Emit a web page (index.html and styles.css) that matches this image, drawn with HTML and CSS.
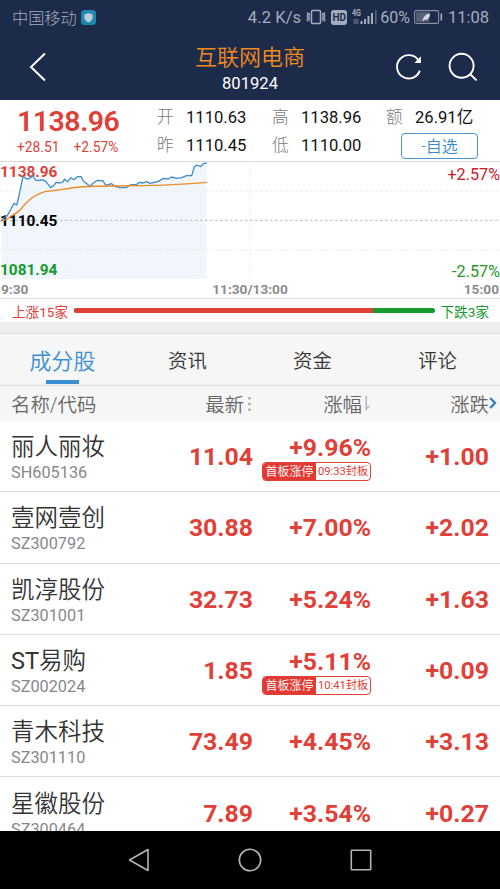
FILE: index.html
```html
<!DOCTYPE html>
<html lang="zh-CN">
<head>
    <meta charset="UTF-8">
    <meta name="viewport" content="width=device-width, initial-scale=1.0">
    <title>互联网电商</title>
    <link rel="stylesheet" href="styles.css">
</head>
<body>
    <div class="status-bar">
        <span class="carrier">中国移动</span>
        <svg class="shield" width="15" height="15" viewBox="0 0 15 15">
            <rect width="15" height="15" rx="3.5" fill="#2088ae"/>
            <path d="M7.5 3 L11.7 4.4 V7.5 Q11.5 10.6 7.5 12.4 Q3.5 10.6 3.3 7.5 V4.4 Z" fill="#b9ccd9"/>
        </svg>
        <span class="speed">4.2 K/s</span>
        <svg class="vibrate" width="20" height="16" viewBox="0 0 20 16" fill="none" stroke="#a4adbb">
            <rect x="5.5" y="1.5" width="9" height="13" rx="1" stroke-width="1.5"/>
            <path d="M1 3.5 l1.3 1.5 -1.3 2 1.3 2 -1.3 2 1 1.5 M3.2 4 v8 M16.8 4 v8 M19 3.5 l-1.3 1.5 1.3 2 -1.3 2 1.3 2 -1 1.5" stroke-width="1.2"/>
        </svg>
        <span class="hd">HD</span>
        <svg class="signal" width="26" height="18" viewBox="0 0 26 18">
            <text x="0" y="8" class="net" textLength="9" lengthAdjust="spacingAndGlyphs">4G</text>
            <path d="M1.5 11h5v5h-5z" fill="#4b5870"/>
            <path d="M8.5 13h2v3h-2z M12 11h2v5h-2z M15.5 8h2v8h-2z M19 5h2v11h-2z" fill="#a4adbb"/>
            <path d="M23 2h1.6v14h-1.6z" fill="#59657b"/>
        </svg>
        <span class="percent">60%</span>
        <svg class="battery" width="29" height="14" viewBox="0 0 29 14">
            <rect x="0.6" y="0.6" width="24" height="12.8" rx="1.5" fill="none" stroke="#8791a2" stroke-width="1.1"/>
            <rect x="2.2" y="2.2" width="13" height="9.6" fill="#56627a"/>
            <path d="M8.5 11 C9.5 6 12 4 16 3.6 C16 8 14 10.5 10.2 9.8 L9 11.5 Z" fill="#d2d7de"/>
            <path d="M27.3 3.5v7" stroke="#a4adbb" stroke-width="1.6"/>
        </svg>
        <span class="clock">11:08</span>
    </div>

    <header class="header">
        <svg class="back" width="20" height="32" viewBox="0 0 20 32" fill="none" stroke="#fff" stroke-width="2">
            <path d="M17 2.5 L3 16 L17 29.5"/>
        </svg>
        <div class="title">
            <h1>互联网电商</h1>
            <p>801924</p>
        </div>
        <div class="actions">
            <svg width="28" height="28" viewBox="0 0 28 28" fill="none" stroke="#fff" stroke-width="1.9">
                <path d="M24.8 17.6 A11.7 11.7 0 1 1 23.4 7.2"/>
                <path d="M25.9 3.3 V10 H19.4 Z" fill="#fff" stroke="none"/>
            </svg>
            <svg width="30" height="30" viewBox="0 0 30 30" fill="none" stroke="#fff" stroke-width="1.9">
                <circle cx="13.6" cy="13.8" r="12"/>
                <path d="M22.3 22.3 L28.6 28.4"/>
            </svg>
        </div>
    </header>

    <section class="quote">
        <div class="price">
            <strong>1138.96</strong>
            <div class="change"><span>+28.51</span><span>+2.57%</span></div>
        </div>
        <dl class="stats">
            <dt>开</dt><dd>1110.63</dd>
            <dt>高</dt><dd>1138.96</dd>
            <dt>额</dt><dd>26.91亿</dd>
            <dt>昨</dt><dd>1110.45</dd>
            <dt>低</dt><dd>1110.00</dd>
            <dd class="watch"><button>-自选</button></dd>
        </dl>
    </section>

    <section class="chart">
        <!-- intraday price (blue) and average (orange) -->
        <svg class="plot" viewBox="0 9 1500 354" preserveAspectRatio="none">
            <path class="area" d="M4 186 L10 178 22 170 33 150 42 133 50 138 57 110 67 62 70 52 80 60 90 58 98 50 108 64 130 63 138 68 152 86 163 78 168 70 180 72 190 68 193 60 203 68 213 56 222 62 232 53 243 53 250 66 270 82 280 72 292 64 308 65 318 79 335 74 345 82 360 86 378 86 390 78 410 76 418 70 430 72 440 68 450 73 475 67 490 58 505 60 515 54 530 58 545 56 560 50 575 50 583 24 590 18 602 23 610 14 620 12 V360 H4 Z"/>
            <path class="grid-line" d="M0 96 H1500 M0 273 H1500 M750 12 V360"/>
            <path class="mid-line" d="M0 184 H1500"/>
        </svg>
        <span class="label high">1138.96</span>
        <span class="label middle">1110.45</span>
        <span class="label low">1081.94</span>
        <span class="label rate-high">+2.57%</span>
        <span class="label rate-low">-2.57%</span>
        <svg class="plot lines" viewBox="0 9 1500 354" preserveAspectRatio="none">
            <path class="price-line" d="M4 186 L10 178 22 170 33 150 42 133 50 138 57 110 67 62 70 52 80 60 90 58 98 50 108 64 130 63 138 68 152 86 163 78 168 70 180 72 190 68 193 60 203 68 213 56 222 62 232 53 243 53 250 66 270 82 280 72 292 64 308 65 318 79 335 74 345 82 360 86 378 86 390 78 410 76 418 70 430 72 440 68 450 73 475 67 490 58 505 60 515 54 530 58 545 56 560 50 575 50 583 24 590 18 602 23 610 14 620 12"/>
            <path class="average-line" d="M4 186 C18 184 26 176 38 168 C48 164 52 160 60 153 C75 134 95 110 135 98 C180 94 200 88 240 84 C300 79 400 81 460 79 C520 78 570 74 620 70"/>
        </svg>
        <div class="times"><span>9:30</span><span>11:30/13:00</span><span>15:00</span></div>
    </section>

    <section class="breadth">
        <span class="up">上涨15家</span>
        <div class="bar"><i></i></div>
        <span class="down">下跌3家</span>
    </section>

    <nav class="tabs">
        <a class="active">成分股</a>
        <a>资讯</a>
        <a>资金</a>
        <a>评论</a>
    </nav>

    <div class="row head">
        <span>名称/代码</span>
        <span class="sortable">最新<svg width="6" height="16" viewBox="0 0 6 16"><path d="M1 1h3v2.5h-3z M1 6.7h3v2.5h-3z M1 12.4h3v2.5h-3z" fill="#b9b9b9"/></svg></span>
        <span class="sortable">涨幅<svg width="6" height="16" viewBox="0 0 6 16"><path d="M0.5 0 H2 V11 L6 8.5 L0.5 15.5 Z" fill="#b9b9b9"/></svg></span>
        <span class="sortable last">涨跌<svg width="8" height="14" viewBox="0 0 8 14"><path d="M1.2 1 L6 6 L1.2 11" fill="none" stroke="#2f77cc" stroke-width="2.2"/></svg></span>
    </div>

    <main class="list">
        <div class="row">
            <div class="stock"><b>丽人丽妆</b><small>SH605136</small></div>
            <span class="num">11.04</span>
            <div class="num">+9.96%<div class="tag"><em>首板涨停</em><span>09:33封板</span></div></div>
            <span class="num">+1.00</span>
        </div>
        <div class="row">
            <div class="stock"><b>壹网壹创</b><small>SZ300792</small></div>
            <span class="num">30.88</span>
            <span class="num">+7.00%</span>
            <span class="num">+2.02</span>
        </div>
        <div class="row">
            <div class="stock"><b>凯淳股份</b><small>SZ301001</small></div>
            <span class="num">32.73</span>
            <span class="num">+5.24%</span>
            <span class="num">+1.63</span>
        </div>
        <div class="row">
            <div class="stock"><b><span class="latin">ST</span>易购</b><small>SZ002024</small></div>
            <span class="num">1.85</span>
            <div class="num">+5.11%<div class="tag"><em>首板涨停</em><span>10:41封板</span></div></div>
            <span class="num">+0.09</span>
        </div>
        <div class="row">
            <div class="stock"><b>青木科技</b><small>SZ301110</small></div>
            <span class="num">73.49</span>
            <span class="num">+4.45%</span>
            <span class="num">+3.13</span>
        </div>
        <div class="row">
            <div class="stock"><b>星徽股份</b><small>SZ300464</small></div>
            <span class="num">7.89</span>
            <span class="num">+3.54%</span>
            <span class="num">+0.27</span>
        </div>
    </main>

    <footer class="nav-bar">
        <svg width="24" height="24" viewBox="0 0 24 24"><path d="M21 1.5 V22.5 L2.5 12 Z"/></svg>
        <svg width="24" height="24" viewBox="0 0 24 24"><circle cx="12" cy="12" r="10.7"/></svg>
        <svg width="24" height="24" viewBox="0 0 24 24"><rect x="2.3" y="2.3" width="19.4" height="19.4" rx="0.5"/></svg>
    </footer>
</body>
</html>
```

FILE: styles.css
```css
* {
    box-sizing: border-box;
    margin: 0;
    padding: 0;
}
body {
    width: 500px;
    height: 889px;
    overflow: hidden;
    display: flex;
    flex-direction: column;
    background: #fff;
    color: #333;
    font-family: Roboto, "Noto Sans CJK SC", sans-serif;
    font-weight: 400;
    white-space: nowrap;
}
body > * {
    flex: none;
}
svg {
    display: block;
    flex: none;
}

.status-bar {
    height: 34px;
    padding: 0 11px 0 12px;
    display: flex;
    align-items: center;
    background: #1c2b4a;
    color: #a4adbb;
    font-size: 16.5px;
}
.carrier {
    width: 65px;
    font-size: 16.2px;
    font-weight: 300;
}
.shield {
    margin-left: 4px;
}
.speed {
    margin-left: auto;
    letter-spacing: 0.1px;
}
.vibrate {
    margin-left: 5px;
}
.hd {
    width: 16px;
    height: 15px;
    margin-left: 5px;
    border-radius: 3px;
    background: #a4adbb;
    color: #1c2b4a;
    font-size: 10px;
    font-weight: 700;
    line-height: 15px;
    text-align: center;
}
.signal {
    margin-left: 5px;
}
.net {
    fill: #a4adbb;
    font-size: 9px;
    font-weight: 700;
}
.percent {
    margin-left: 2px;
    font-size: 16px;
}
.battery {
    margin-left: 4px;
}
.clock {
    margin-left: 5px;
}

.header {
    height: 66px;
    padding: 0 22px 0 28px;
    display: grid;
    grid-template-columns: 1fr auto 1fr;
    align-items: center;
    background: #1c2b4a;
    color: #fff;
    text-align: center;
}
.title {
    padding: 5px 6px 0 0;
}
.title h1 {
    color: #f28a1c;
    font-size: 22px;
    font-weight: 350;
    line-height: 28px;
}
.title p {
    font-size: 16.6px;
    line-height: 24px;
}
.actions {
    display: flex;
    justify-content: flex-end;
    align-items: center;
    gap: 25px;
}

.quote {
    height: 61px;
    display: flex;
    color: #111;
}
.price {
    width: 157px;
    padding: 6px 0 0 17px;
    color: #df4038;
}
.price strong {
    display: block;
    font-size: 28.5px;
    font-weight: 600;
    letter-spacing: -0.5px;
    line-height: 32px;
}
.change {
    display: flex;
    gap: 14px;
    font-size: 13.8px;
    line-height: 19px;
}
.stats {
    display: grid;
    grid-template-columns: 29px 86px 29px 85px 29px 70px;
    grid-template-rows: 28px 28px;
    padding-top: 4px;
    font-size: 16.6px;
    line-height: 28px;
}
.stats dt {
    color: #777;
    font-weight: 300;
}
.watch {
    grid-column: 5 / 7;
    padding: 1px 0 0 15px;
}
.watch button {
    display: block;
    width: 77px;
    height: 26px;
    padding-top: 1px;
    border: 1px solid #4b93cd;
    border-radius: 4px;
    background: #fff;
    color: #3b88cb;
    font-family: inherit;
    font-size: 16px;
    font-weight: 350;
    line-height: 24px;
}

.chart {
    position: relative;
    height: 138px;
    border-top: 1px solid #d9d9d9;
    border-bottom: 1px solid #ddd;
}
.plot {
    width: 500px;
    height: 118px;
}
.plot path {
    fill: none;
    vector-effect: non-scaling-stroke;
}
.plot .area {
    fill: #f1f6fc;
}
.plot .grid-line {
    stroke: #ececec;
    stroke-dasharray: 3 2;
}
.plot .mid-line {
    stroke: #b5b5b5;
    stroke-dasharray: 2.5 2.5;
}
.plot .price-line {
    stroke: #3d8bc8;
    stroke-width: 1.3;
    stroke-linejoin: round;
}
.plot .average-line {
    stroke: #ec8a24;
    stroke-width: 1.4;
}
/* axis values and the lines are drawn over the plot */
.lines,
.label {
    position: absolute;
    left: 0;
}
.lines {
    top: 0;
}
.label {
    color: #000;
    font-size: 15.4px;
    font-weight: 700;
    line-height: 18px;
}
.high {
    top: 1px;
    color: #df4038;
}
.middle {
    top: 50px;
}
.low {
    top: 99px;
    color: #159a2f;
}
.rate-high,
.rate-low {
    left: auto;
    right: 0;
    font-size: 16.2px;
    font-weight: 400;
}
.rate-high {
    top: 4px;
    color: #cf1826;
}
.rate-low {
    top: 101px;
    color: #259722;
}
.times {
    display: grid;
    grid-template-columns: 1fr auto 1fr;
    padding: 0 1px;
    color: #8c8c8c;
    font-size: 13.7px;
    font-weight: 700;
    line-height: 19px;
}
.times span:last-child {
    text-align: right;
}

.breadth {
    height: 23px;
    padding: 0 11px 0 12px;
    display: flex;
    align-items: center;
    gap: 6px;
    font-size: 13.6px;
}
.up {
    color: #df4038;
}
.down {
    color: #159a2f;
}
.bar {
    flex: 1;
    height: 5px;
    border-radius: 3px;
    background: #159a2f;
    overflow: hidden;
}
.bar i {
    display: block;
    width: 82.8%;
    height: 5px;
    background: #df4038;
}

.tabs {
    height: 64px;
    border-top: 11px solid #eee;
    border-bottom: 1px solid #ddd;
    display: grid;
    grid-template-columns: repeat(4, 1fr);
    background: #f6f6f6;
    box-shadow: inset 0 1px #ddd;
    font-size: 19.4px;
    font-weight: 350;
    line-height: 57px;
    text-align: center;
}
.tabs .active {
    color: #3a8ed6;
    font-size: 22px;
}
.tabs .active::after {
    content: "";
    display: block;
    width: 33px;
    height: 4px;
    margin: -10px auto 0;
    background: #3a8ed6;
}

.row {
    height: 71.3px;
    padding: 1px 11px 0 11px;
    display: grid;
    grid-template-columns: 124px 118px 118px 118px;
    align-items: center;
    border-bottom: 1px solid #ddd;
}
.head {
    height: 35px;
    padding-top: 0;
    border: 0;
    background: #f6f6f6;
    color: #666;
    font-size: 19.4px;
    font-weight: 350;
}
.sortable {
    display: flex;
    justify-content: flex-end;
    align-items: center;
    gap: 3px;
}
.last {
    gap: 0;
    margin-right: -8px;
}
.list {
    height: 410px;
    overflow: hidden;
}
.stock {
    padding-top: 1px;
}
.stock b {
    display: block;
    color: #333;
    font-size: 23.5px;
    font-weight: 350;
    line-height: 32px;
}
.latin {
    font-weight: 400;
}
.stock small {
    display: block;
    color: #888;
    font-size: 16.3px;
    line-height: 20px;
}
.num {
    color: #df4038;
    font-size: 24.8px;
    font-weight: 700;
    line-height: 29px;
    text-align: right;
}
.tag {
    width: 109px;
    height: 19px;
    margin-left: auto;
    display: flex;
    border: 1px solid #df4038;
    border-radius: 4px;
    overflow: hidden;
    font-size: 12px;
    font-weight: 350;
    line-height: 18px;
    text-align: center;
}
.tag em {
    width: 53px;
    background: #e23a33;
    color: #fff;
    font-style: normal;
}
.tag span {
    flex: 1;
    font-size: 11.2px;
    font-weight: 400;
}

.nav-bar {
    height: 58px;
    display: flex;
    justify-content: center;
    align-items: center;
    gap: 87px;
    background: #000;
}
.nav-bar svg {
    fill: none;
    stroke: #b5b5b5;
    stroke-width: 1.6;
    stroke-linejoin: round;
}
```
